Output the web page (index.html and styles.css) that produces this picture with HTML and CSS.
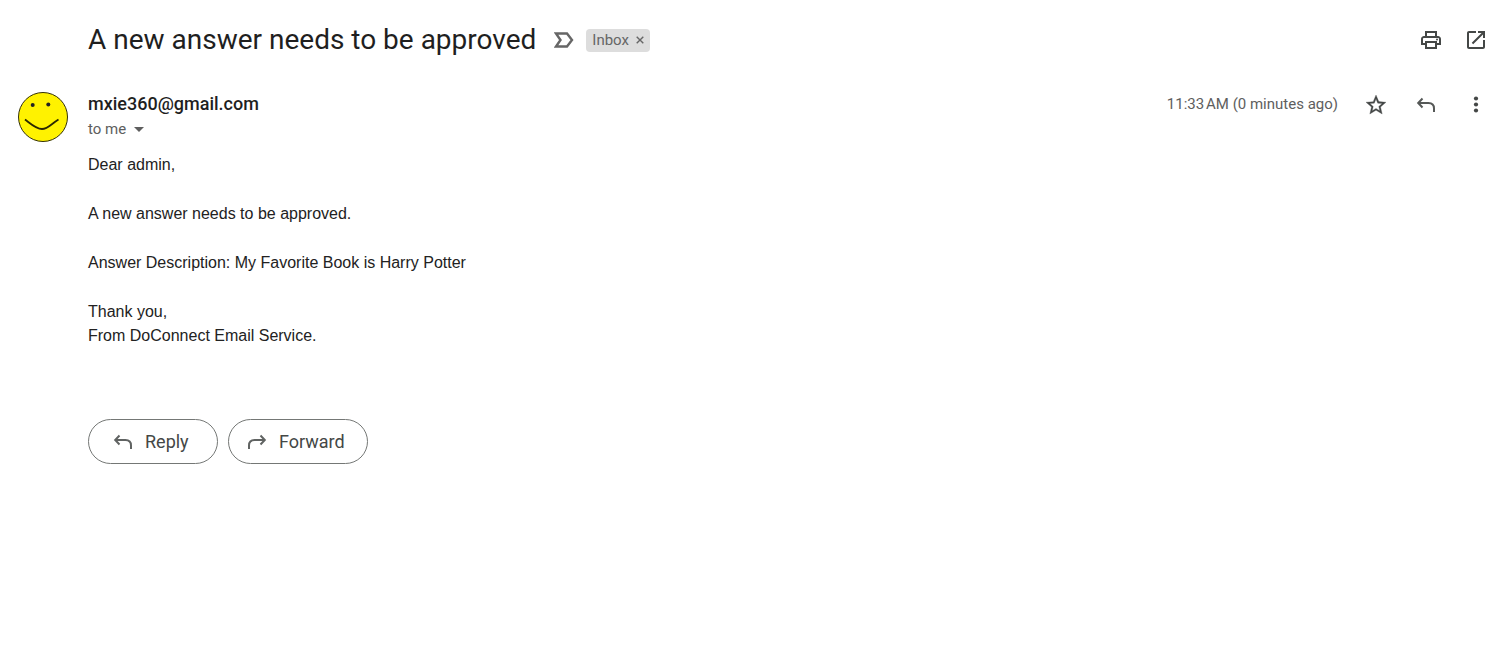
FILE: index.html
```html
<!DOCTYPE html>
<html lang="en">
<head>
<meta charset="utf-8">
<title>A new answer needs to be approved</title>
<link rel="stylesheet" href="styles.css">
</head>
<body>
<main class="mail">
  <header class="subject-bar">
    <h1 class="subject">A new answer needs to be approved</h1>
    <button class="icon-btn importance" aria-label="Mark as important">
      <svg class="icon-small" viewBox="0 0 20 16"><path d="M2 1.500h11L18 8l-5 6.500H2L6.500 8z" fill="none" stroke="#666" stroke-width="2.400"/></svg>
    </button>
    <span class="label">Inbox
      <button class="label-remove" aria-label="Remove label Inbox"><svg class="cross" viewBox="0 0 8 8"><path d="M.7.7l6.600 6.600M7.300.7L.7 7.300" stroke="#666" stroke-width="1.400"/></svg></button>
    </span>
    <div class="subject-tools">
      <button class="icon-btn" aria-label="Print"><svg class="icon" viewBox="0 0 24 24"><path fill="#444746" d="M19 8h-1V3H6v5H5c-1.660 0-3 1.340-3 3v6h4v4h12v-4h4v-6c0-1.660-1.340-3-3-3zM8 5h8v3H8V5zm8 12v2H8v-4h8v2zm2-2v-2H6v2H4v-4c0-.55.45-1 1-1h14c.55 0 1 .45 1 1v4h-2z"/><circle cx="18" cy="11.500" r="1" fill="#444746"/></svg></button>
      <button class="icon-btn" aria-label="Open in new window"><svg class="icon" viewBox="0 0 24 24"><path fill="#444746" d="M19 19H5V5h7V3H5c-1.110 0-2 .9-2 2v14c0 1.100.89 2 2 2h14c1.100 0 2-.9 2-2v-7h-2v7zM14 3v2h3.590l-9.830 9.830 1.410 1.410L19 6.410V10h2V3h-7z"/></svg></button>
    </div>
  </header>

  <article class="message">
    <svg class="avatar" viewBox="0 0 50 50" role="img" aria-label="Smiley">
      <circle cx="25" cy="25" r="24.500" fill="#fff200" stroke="#33300a"/>
      <circle cx="14.700" cy="13" r="2" fill="#222"/><circle cx="30.300" cy="12.500" r="2" fill="#222"/>
      <path d="M7 27.500C13 32 18 37 24 37S33 32 40.500 27.500" fill="none" stroke="#2b2800" stroke-width="1.800"/>
    </svg>
    <div class="content">
      <div class="meta">
        <div class="from">
          <div class="sender">mxie360@gmail.com</div>
          <div class="recipient">to me <button class="details" aria-label="Show details"><svg class="caret" viewBox="0 0 10 5"><path d="M0 0h10L5 5z" fill="#5e5e5e"/></svg></button></div>
        </div>
        <time class="time">11:33&#8239;AM (0 minutes ago)</time>
        <div class="message-tools">
          <button class="icon-btn" aria-label="Star"><svg class="icon bold" viewBox="0 0 24 24"><path fill="#444746" d="M22 9.240l-7.190-.62L12 2 9.190 8.630 2 9.240l5.460 4.730L5.820 21 12 17.270 18.180 21l-1.630-7.030L22 9.240zM12 15.400l-3.760 2.270 1-4.280-3.320-2.880 4.380-.38L12 6.100l1.710 4.040 4.380.38-3.320 2.880 1 4.280L12 15.400z"/></svg></button>
          <button class="icon-btn" aria-label="Reply"><svg class="icon" viewBox="0 0 24 24"><path d="M8.500 5.500L4.200 10l4.300 4.500M4.200 10h10.300q5.500 0 5.500 5.500V19" fill="none" stroke="#555857" stroke-width="2"/></svg></button>
          <button class="icon-btn" aria-label="More"><svg class="icon" viewBox="0 0 24 24" fill="#444746"><circle cx="12" cy="5.500" r="2.100"/><circle cx="12" cy="11.500" r="2.100"/><circle cx="12" cy="17.500" r="2.100"/></svg></button>
        </div>
      </div>
      <div class="body">
        <p>Dear admin,</p>
        <p>A new answer needs to be approved.</p>
        <p>Answer Description: My Favorite Book is Harry Potter</p>
        <p>Thank you,<br>From DoConnect Email Service.</p>
      </div>
      <div class="actions">
        <button class="pill reply"><svg class="icon" viewBox="0 0 24 24"><path d="M8.500 5.500L4.200 10l4.300 4.500M4.200 10h10.300q5.500 0 5.500 5.500V19" fill="none" stroke="#606362" stroke-width="2"/></svg>Reply</button>
        <button class="pill forward"><svg class="icon" viewBox="0 0 24 24"><path d="M15.500 5.500L19.800 10l-4.300 4.500M19.800 10H9.500q-5.500 0-5.500 5.500V19" fill="none" stroke="#606362" stroke-width="2"/></svg>Forward</button>
      </div>
    </div>
  </article>
</main>
</body>
</html>
```
FILE: styles.css
```css
* { box-sizing: border-box; }
body { margin: 0; background: #fff; color: #1f1f1f; font-family: Roboto, "Open Sans", sans-serif; }
button { margin: 0; padding: 0; border: 0; background: none; color: inherit; font: inherit; cursor: pointer; }
svg { display: block; flex: none; }
.icon { width: 24px; height: 24px; }
.bold { stroke: #444746; stroke-width: 0.3; }
.icon-btn { display: flex; flex: none; }
.mail { padding: 20px 16px 20px 18px; }

.subject-bar { display: flex; align-items: center; min-height: 40px; padding-left: 70px; }
.subject { margin: 0; font-size: 28px; line-height: 40px; font-weight: 400; }
.importance { margin-left: 18px; }
.icon-small { width: 20px; height: 16px; }
.label { display: flex; align-items: center; gap: 7px; height: 23px; margin-left: 12px; padding: 0 6px; border-radius: 4px; background: #ddd; color: #666; font-size: 15px; }
.label-remove { display: flex; }
.cross { width: 8px; height: 8px; }
.subject-tools { display: flex; gap: 21px; margin-left: auto; }

.message { display: flex; gap: 20px; padding-top: 32px; }
.avatar { width: 50px; height: 50px; }
.content { flex: 1; min-width: 0; }
.meta { display: flex; align-items: flex-start; }
.from { flex: 1; }
.sender { font-size: 18px; line-height: 24px; font-weight: 500; }
.recipient { display: flex; align-items: center; gap: 8px; color: #5e5e5e; font-size: 15px; line-height: 26px; }
.details { display: flex; }
.caret { width: 10px; height: 5px; }
.time { color: #5e5e5e; font-size: 15px; line-height: 24px; }
.message-tools { display: flex; gap: 26px; margin-left: 26px; padding-top: 1px; }
.body { padding-top: 11px; color: #222; font-family: "Liberation Sans", Arial, sans-serif; font-size: 16px; line-height: 24px; }
.body p { margin: 0 0 25px; }
.actions { display: flex; gap: 10px; padding-top: 46px; }
.pill { display: flex; align-items: center; gap: 10px; height: 45px; border: 1px solid #747775; border-radius: 23px; color: #444746; font-size: 18px; }
.reply { width: 130px; padding-left: 22px; }
.forward { width: 140px; padding-left: 16px; }
```
